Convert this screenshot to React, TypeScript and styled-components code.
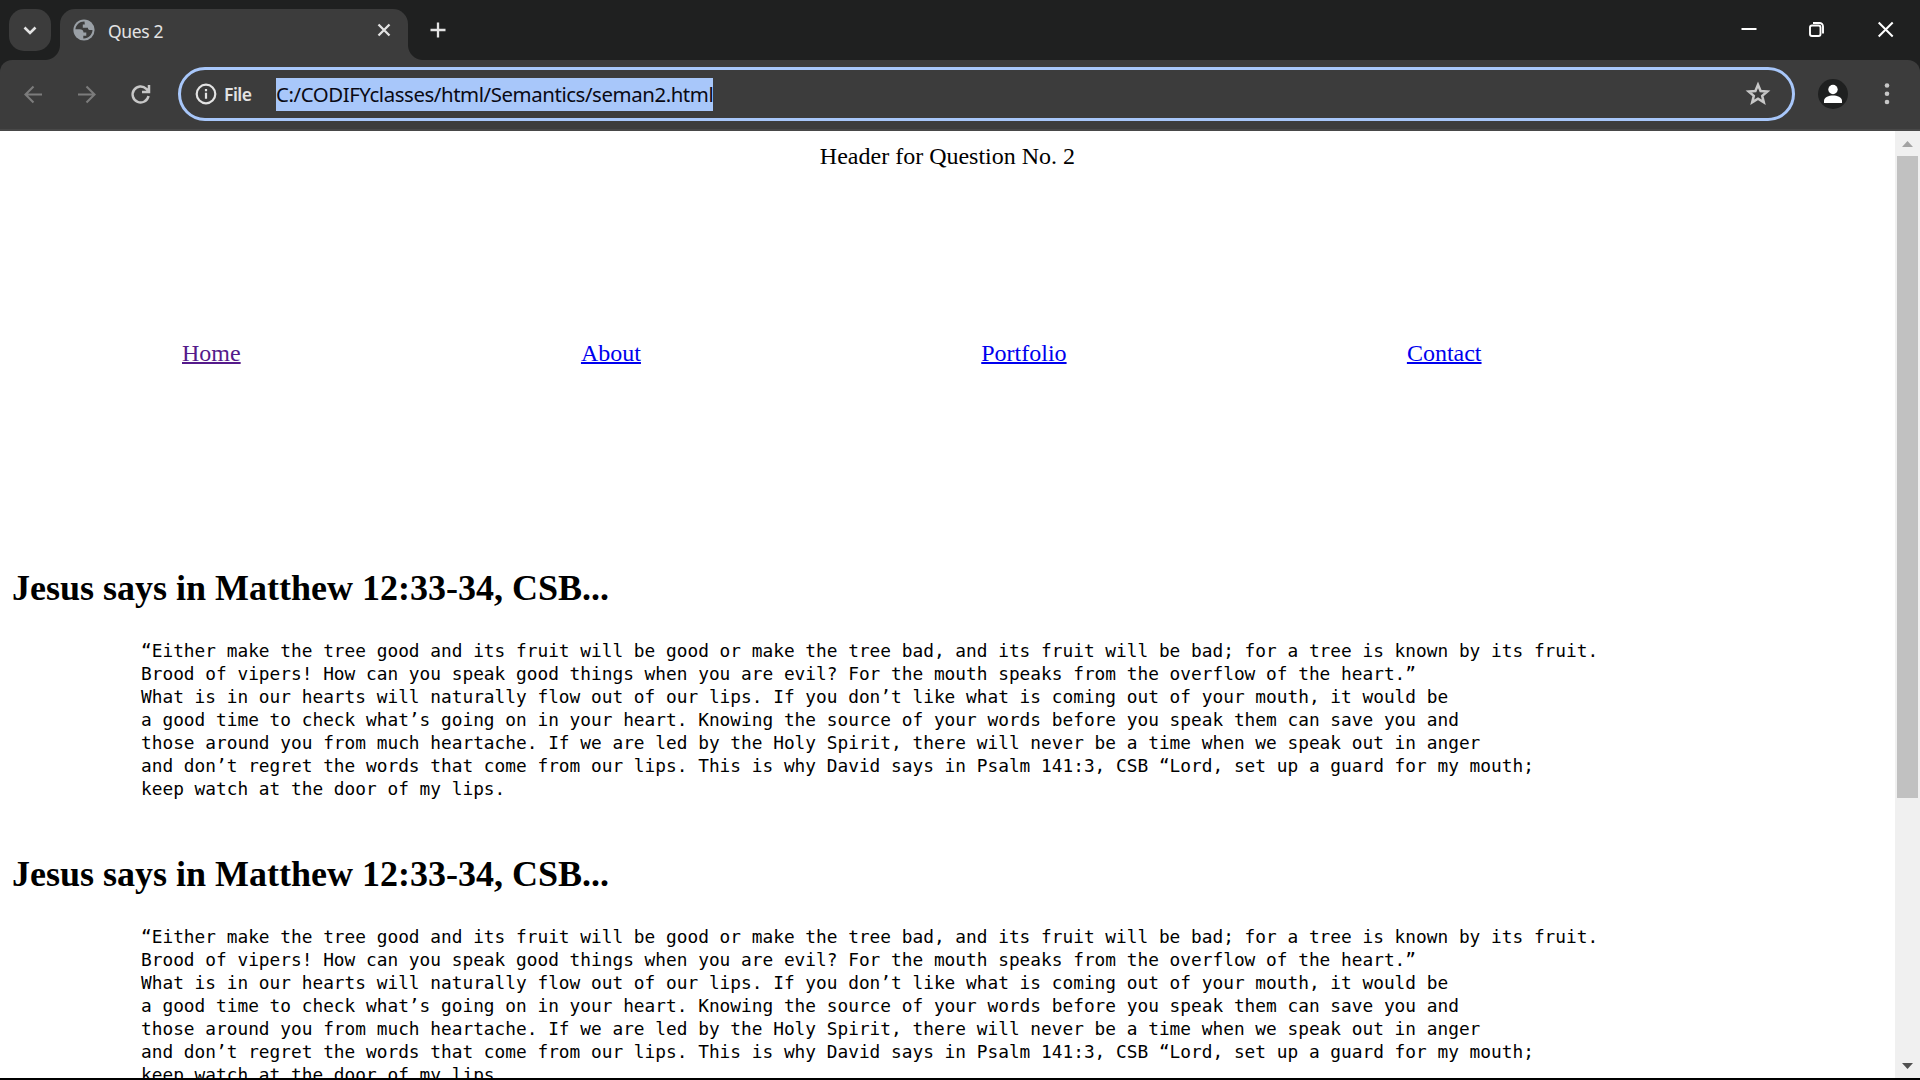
import React from "react";
import styled, { createGlobalStyle } from "styled-components";

const Global = createGlobalStyle`
  html, body { margin: 0; padding: 0; overflow: hidden; background: #fff; }
  * { box-sizing: border-box; }
`;

const Window = styled.div`
  width: 1920px;
  height: 1080px;
  display: flex;
  flex-direction: column;
  overflow: hidden;
  background: #1f2020;
  border-bottom: 2px solid #000;
  font-family: "Noto Sans", "Open Sans", sans-serif;
`;

const TitleBar = styled.div`
  height: 60px;
  flex: none;
  display: flex;
  align-items: flex-start;
  padding: 9px 0 0 9px;
`;

const TabSearch = styled.button`
  width: 42px;
  height: 42px;
  padding: 0;
  border: 0;
  border-radius: 15px;
  background: #3c3c3c;
  display: flex;
`;

const Tab = styled.div`
  position: relative;
  width: 348px;
  height: 51px;
  margin-left: 9px;
  padding: 0 9px 9px 13px;
  display: flex;
  align-items: center;
  border-radius: 15px 15px 0 0;
  background: #3c3c3c;
  color: #e3e3e3;

  &::before,
  &::after {
    content: "";
    position: absolute;
    bottom: 0;
    width: 15px;
    height: 15px;
  }
  &::before {
    left: -15px;
    background: radial-gradient(circle at 0 0, transparent 14.5px, #3c3c3c 15.5px);
  }
  &::after {
    right: -15px;
    background: radial-gradient(circle at 100% 0, transparent 14.5px, #3c3c3c 15.5px);
  }
`;

const TabTitle = styled.span`
  flex: 1;
  margin-left: 13px;
  padding-top: 2px;
  font-size: 17.5px;
  line-height: 24px;
  letter-spacing: -0.35px;
`;

const NewTab = styled.div`
  margin-left: 14px;
  height: 42px;
  display: flex;
`;

const Controls = styled.div`
  margin-left: auto;
  display: flex;
  height: 42px;
`;

const Control = styled.div`
  width: 69px;
  display: flex;
  justify-content: center;
`;

const Toolbar = styled.div`
  height: 71px;
  flex: none;
  display: flex;
  align-items: center;
  padding: 0 0 1px 12px;
  border-radius: 12px 12px 0 0;
  border-bottom: 2px solid #484848;
  background: #3c3c3c;
`;

const NavButton = styled.div`
  width: 42px;
  height: 42px;
  margin-right: 12px;
  display: flex;
`;

const Omnibox = styled.div`
  width: 1617px;
  height: 54px;
  margin-left: 4px;
  padding: 0 19px 0 14px;
  display: flex;
  align-items: center;
  border: 3px solid #a8c7fa;
  border-radius: 27px;
  flex: none;
`;

const Scheme = styled.span`
  width: 52px;
  margin: 0 0 0 7px;
  color: #e3e3e3;
  font-size: 17.5px;
  font-weight: 600;
  line-height: 33px;
  letter-spacing: -0.5px;
`;

const Url = styled.span`
  height: 33px;
  width: 437px;
  background: #a8c7fa;
  color: #0a0a14;
  font-size: 20.4px;
  line-height: 33px;
  letter-spacing: -0.42px;
  white-space: nowrap;
`;

const StarSlot = styled.div`
  margin-left: auto;
  display: flex;
`;

const Avatar = styled.div`
  width: 30px;
  height: 30px;
  margin-left: 23px;
  border-radius: 50%;
  background: #1f2020;
  display: flex;
`;

const MenuSlot = styled.div`
  margin-left: 24px;
  display: flex;
`;

const Viewport = styled.div`
  flex: 1;
  min-height: 0;
  display: flex;
  background: #fff;
`;

const Page = styled.main`
  flex: 1;
  padding: 12px;
  overflow: hidden;
  color: #000;
  font: 24px "Liberation Serif", "Times New Roman", serif;
`;

const PageHeader = styled.header`
  height: 180px;
  line-height: 27px;
  text-align: center;
`;

const PageNav = styled.nav`
  display: flex;
  gap: 340.3px;
  height: 225px;
  padding: 17px 0 0 170px;
  line-height: 27px;
`;

const NavLink = styled.a<{ $visited?: boolean }>`
  color: ${(p) => (p.$visited ? "#551a8b" : "#0000ee")};
  text-decoration: underline;
  text-decoration-thickness: 2px;
`;

const Article = styled.section`
  height: 286px;
`;

const Heading = styled.h2`
  margin: 0;
  padding-top: 20px;
  font-size: 36px;
  line-height: 41px;
`;

const Verse = styled.pre`
  margin: 30px 0 0 129px;
  font-family: "DejaVu Sans Mono", "Liberation Mono", monospace;
  font-size: 17.81px;
  line-height: 23px;
`;

const Scrollbar = styled.div`
  width: 25px;
  flex: none;
  display: flex;
  flex-direction: column;
  align-items: center;
  background: #f0f0f0;
`;

const ScrollArrow = styled.svg`
  width: 25px;
  height: 25px;
  flex: none;
`;

const Thumb = styled.div`
  width: 21px;
  height: 642px;
  margin-bottom: auto;
  background: #c1c1c1;
`;

const verse = `“Either make the tree good and its fruit will be good or make the tree bad, and its fruit will be bad; for a tree is known by its fruit.
Brood of vipers! How can you speak good things when you are evil? For the mouth speaks from the overflow of the heart.”
What is in our hearts will naturally flow out of our lips. If you don’t like what is coming out of your mouth, it would be
a good time to check what’s going on in your heart. Knowing the source of your words before you speak them can save you and
those around you from much heartache. If we are led by the Holy Spirit, there will never be a time when we speak out in anger
and don’t regret the words that come from our lips. This is why David says in Psalm 141:3, CSB “Lord, set up a guard for my mouth;
keep watch at the door of my lips.`;

const Stroke = ({ d, color = "#e3e3e3", w = 2, size = 42 }: { d: string; color?: string; w?: number; size?: number }) => (
  <svg width={size} height={size} viewBox={`0 0 ${size} ${size}`} fill="none" stroke={color} strokeWidth={w}>
    <path d={d} />
  </svg>
);

const Globe = () => (
  <svg width="22" height="22" viewBox="0 0 22 22">
    <circle cx="11" cy="11" r="10.6" fill="#9aa0a6" />
    <path
      d="M11.5 2.4C6.8 2.2 2.8 5.7 2.4 10.3h4.2c2.2 0 3.9 1.2 3.9 3.2h2.8v3.3h-3v2.6c4.8.4 9-3.400 9.200-8.400h-2.300c-1.500 0-2.300-.9-2.300-2.300H9.800V5.400h2z"
      fill="#3c3c3c"
    />
  </svg>
);

const Passage = () => (
  <Article>
    <Heading>Jesus says in Matthew 12:33-34, CSB...</Heading>
    <Verse>{verse}</Verse>
  </Article>
);

export default function App() {
  return (
    <Window>
      <Global />
      <TitleBar>
        <TabSearch>
          <Stroke d="M15.500 18.500l5.500 5.500 5.500-5.500" w={2.6} />
        </TabSearch>
        <Tab>
          <Globe />
          <TabTitle>Ques 2</TabTitle>
          <Stroke d="M9.500 9.500l11 11m0-11l-11 11" w={2.3} size={30} />
        </Tab>
        <NewTab>
          <Stroke d="M16 13.500v15M8.500 21h15" w={2.3} size={42} />
        </NewTab>
        <Controls>
          <Control>
            <Stroke d="M14.500 20h15" color="#fff" />
          </Control>
          <Control>
            <Stroke
              d="M16 16.500h6.500a2 2 0 0 1 2 2v6.500a2 2 0 0 1-2 2h-6.500a2 2 0 0 1-2-2v-6.500a2 2 0 0 1 2-2zM17 14h6.500a3.500 3.500 0 0 1 3.500 3.500v7"
              color="#fff"
              w={1.9}
            />
          </Control>
          <Control>
            <Stroke d="M13.700 13.500l14 14m0-14l-14 14" color="#fff" w={2} />
          </Control>
        </Controls>
      </TitleBar>
      <Toolbar>
        <NavButton>
          <Stroke d="M30 21.500H14M21.500 13.500l-8 8 8 8" color="#7c7c7c" w={2.1} />
        </NavButton>
        <NavButton>
          <Stroke d="M12 21.500h16M20.500 13.500l8 8-8 8" color="#7c7c7c" w={2.1} />
        </NavButton>
        <NavButton>
          <Stroke d="M28.500 23a8 8 0 1 1-2.200-7.200l2.700 2.700M29 12v7h-7" color="#c7c7c7" w={2.5} />
        </NavButton>
        <Omnibox>
          <svg width="22" height="22" viewBox="0 0 22 22" fill="none" stroke="#e3e3e3" strokeWidth="2.2">
            <circle cx="11" cy="11" r="9.300" />
            <path d="M11 9.800v6M11 6v2.300" />
          </svg>
          <Scheme>File</Scheme>
          <Url>C:/CODIFYclasses/html/Semantics/seman2.html</Url>
          <StarSlot>
            <svg width="30" height="30" viewBox="0 0 30 30" fill="none" stroke="#c7c7c7" strokeWidth="2.5">
              <path d="M15 5.800l2.600 6.200 6.700.5-5.100 4.400 1.600 6.500-5.800-3.600-5.800 3.600 1.600-6.500-5.100-4.400 6.700-.5z" />
            </svg>
          </StarSlot>
        </Omnibox>
        <Avatar>
          <svg width="30" height="30" viewBox="0 0 30 30" fill="#fff">
            <circle cx="15" cy="10.500" r="4.700" />
            <path d="M6 24v-2c0-4 5-5.500 9-5.500s9 1.500 9 5.500v2z" />
          </svg>
        </Avatar>
        <MenuSlot>
          <svg width="30" height="30" viewBox="0 0 30 30" fill="#c7c7c7">
            <circle cx="15" cy="6.500" r="2.300" />
            <circle cx="15" cy="14.800" r="2.300" />
            <circle cx="15" cy="23" r="2.300" />
          </svg>
        </MenuSlot>
      </Toolbar>
      <Viewport>
        <Page>
          <PageHeader>Header for Question No. 2</PageHeader>
          <PageNav>
            <NavLink $visited>Home</NavLink>
            <NavLink>About</NavLink>
            <NavLink>Portfolio</NavLink>
            <NavLink>Contact</NavLink>
          </PageNav>
          <Passage />
          <Passage />
        </Page>
        <Scrollbar>
          <ScrollArrow viewBox="0 0 25 25">
            <path d="M7 16l5.500-6 5.500 6z" fill="#a3a3a3" />
          </ScrollArrow>
          <Thumb />
          <ScrollArrow viewBox="0 0 25 25">
            <path d="M7 10l5.500 6 5.500-6z" fill="#505050" />
          </ScrollArrow>
        </Scrollbar>
      </Viewport>
    </Window>
  );
}
